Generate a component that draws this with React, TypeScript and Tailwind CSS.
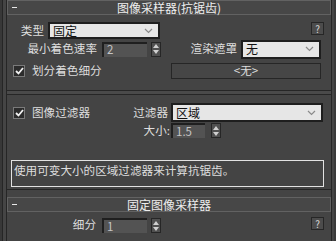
import React from "react";

const Chevron = () => (
  <svg width="9" height="6" viewBox="0 0 9 6" className="shrink-0">
    <polyline points="1,1 4.5,4.5 8,1" fill="none" stroke="#8a8a8a" strokeWidth="1.2" />
  </svg>
);

const Dropdown = ({ value, w, h }: { value: string; w: string; h: string }) => (
  <div
    className={`${w} ${h} flex items-center justify-between bg-[#e6e6e6] border-2 border-[#1e1e1e] pl-[3px] pr-[5px] text-[#111] text-[12px]`}
  >
    <span>{value}</span>
    <Chevron />
  </div>
);

const Arrows = () => (
  <div className="w-[10px] h-[15px] flex flex-col items-center justify-center gap-[2px] bg-[#505050] border border-[#262626]">
    <svg width="6" height="4" viewBox="0 0 6 4">
      <polygon points="3,0 6,4 0,4" fill="#d0d0d0" />
    </svg>
    <svg width="6" height="4" viewBox="0 0 6 4">
      <polygon points="0,0 6,0 3,4" fill="#d0d0d0" />
    </svg>
  </div>
);

const Spinner = ({ value, w, gap }: { value: string; w: string; gap: string }) => (
  <div className={`flex items-center ${gap}`}>
    <div
      className={`${w} h-[15px] flex items-center bg-[#535353] border-t-2 border-l-2 border-[#1f1f1f] pl-[3px] text-[#c4c4c4] text-[11.5px]`}
    >
      {value}
    </div>
    <Arrows />
  </div>
);

const Check = () => (
  <div className="w-[12px] h-[12px] flex items-center justify-center bg-[#2c2c2c] border border-[#7a7a7a] shrink-0">
    <svg width="9" height="8" viewBox="0 0 9 8">
      <polyline points="1,4 3.5,6.5 8,1" fill="none" stroke="#f2f2f2" strokeWidth="1.8" />
    </svg>
  </div>
);

const Help = () => (
  <div className="w-[13px] h-[13px] flex items-center justify-center bg-[#4c4c4c] border border-[#262626] text-[10px] text-[#d8d8d8]">
    ?
  </div>
);

const TitleBar = ({ title }: { title: string }) => (
  <div className="h-[15px] flex items-center border border-[#626262] bg-[#474747] relative">
    <span className="absolute left-[4px] top-[6px] w-[5px] h-[1px] bg-[#e8e8e8]" />
    <span className="flex-1 text-center text-[12px] text-[#eeeeee]">{title}</span>
  </div>
);

export default function App() {
  return (
    <div className="w-[336px] h-[241px] overflow-hidden bg-[#3f3f3f] flex font-['Noto_Sans_CJK_SC',sans-serif] leading-none text-[11.6px] text-[#dedede]">
      {/* left frame */}
      <div className="w-[7px] h-full flex">
        <div className="w-[2px] bg-[#383838]" />
        <div className="w-[1px] bg-[#262626]" />
        <div className="w-[3px] bg-[#454545]" />
        <div className="w-[1px] bg-[#262626]" />
      </div>

      <div className="w-[324px] flex flex-col bg-[#444444]">
        {/* image sampler */}
        <div className="h-[91px] flex flex-col border-b border-[#262626]">
          <TitleBar title="图像采样器(抗锯齿)" />

          <div className="mt-[7px] flex items-start h-[17px]">
            <span className="w-[41px] pr-[4px] text-right self-center">类型</span>
            <Dropdown value="固定" w="w-[112px]" h="h-[17px]" />
            <div className="flex-1" />
            <div className="mr-[7px]">
              <Help />
            </div>
          </div>

          <div className="mt-[1px] flex items-center h-[18px]">
            <span className="w-[95px] pr-[5px] text-right">最小着色速率</span>
            <Spinner value="2" w="w-[45px]" gap="gap-[4px]" />
            <span className="w-[80px] pr-[4px] text-right">渲染遮罩</span>
            <Dropdown value="无" w="w-[80px]" h="h-[19px]" />
          </div>

          <div className="mt-[5px] flex items-center h-[16px]">
            <div className="w-[164px] pl-[6px] flex items-center gap-[7px]">
              <Check />
              <span>划分着色细分</span>
            </div>
            <div className="w-[150px] h-[16px] flex items-center justify-center border border-[#262626] bg-[#464646]">
              &lt;无&gt;
            </div>
          </div>
        </div>

        <div className="h-[3px] bg-[#4a4a4a]" />

        {/* image filter */}
        <div className="h-[96px] flex flex-col border-y border-[#262626]">
          <div className="mt-[8px] flex items-center h-[19px]">
            <div className="w-[123px] pl-[6px] flex items-center gap-[7px]">
              <Check />
              <span>图像过滤器</span>
            </div>
            <span className="w-[41px] pr-[3px] text-right">过滤器</span>
            <Dropdown value="区域" w="w-[152px]" h="h-[19px]" />
          </div>

          <div className="mt-[1px] flex items-center h-[15px]">
            <span className="w-[164px] pr-[1px] text-right">大小:</span>
            <Spinner value="1.5" w="w-[34px]" gap="gap-[6px]" />
          </div>

          <div className="mt-[22px] ml-[4px] w-[313px] h-[27px] border border-[#e2e2e2] pt-[4px] pl-[2px]">
            使用可变大小的区域过滤器来计算抗锯齿。
          </div>
        </div>

        <div className="h-[7px] bg-[#444444]" />

        {/* fixed sampler */}
        <div className="flex-1 flex flex-col">
          <TitleBar title="固定图像采样器" />
          <div className="mt-[5px] flex items-start h-[16px]">
            <span className="w-[95px] pr-[6px] text-right self-center">细分</span>
            <div className="mt-[1px]">
              <Spinner value="1" w="w-[45px]" gap="gap-[4px]" />
            </div>
            <div className="flex-1" />
            <div className="mr-[7px]">
              <Help />
            </div>
          </div>
        </div>
      </div>

      {/* right frame */}
      <div className="flex-1 flex">
        <div className="w-[1px] bg-[#262626]" />
        <div className="w-[2px] bg-[#454545]" />
        <div className="flex-1 bg-[#3a3a3a]" />
      </div>
    </div>
  );
}
